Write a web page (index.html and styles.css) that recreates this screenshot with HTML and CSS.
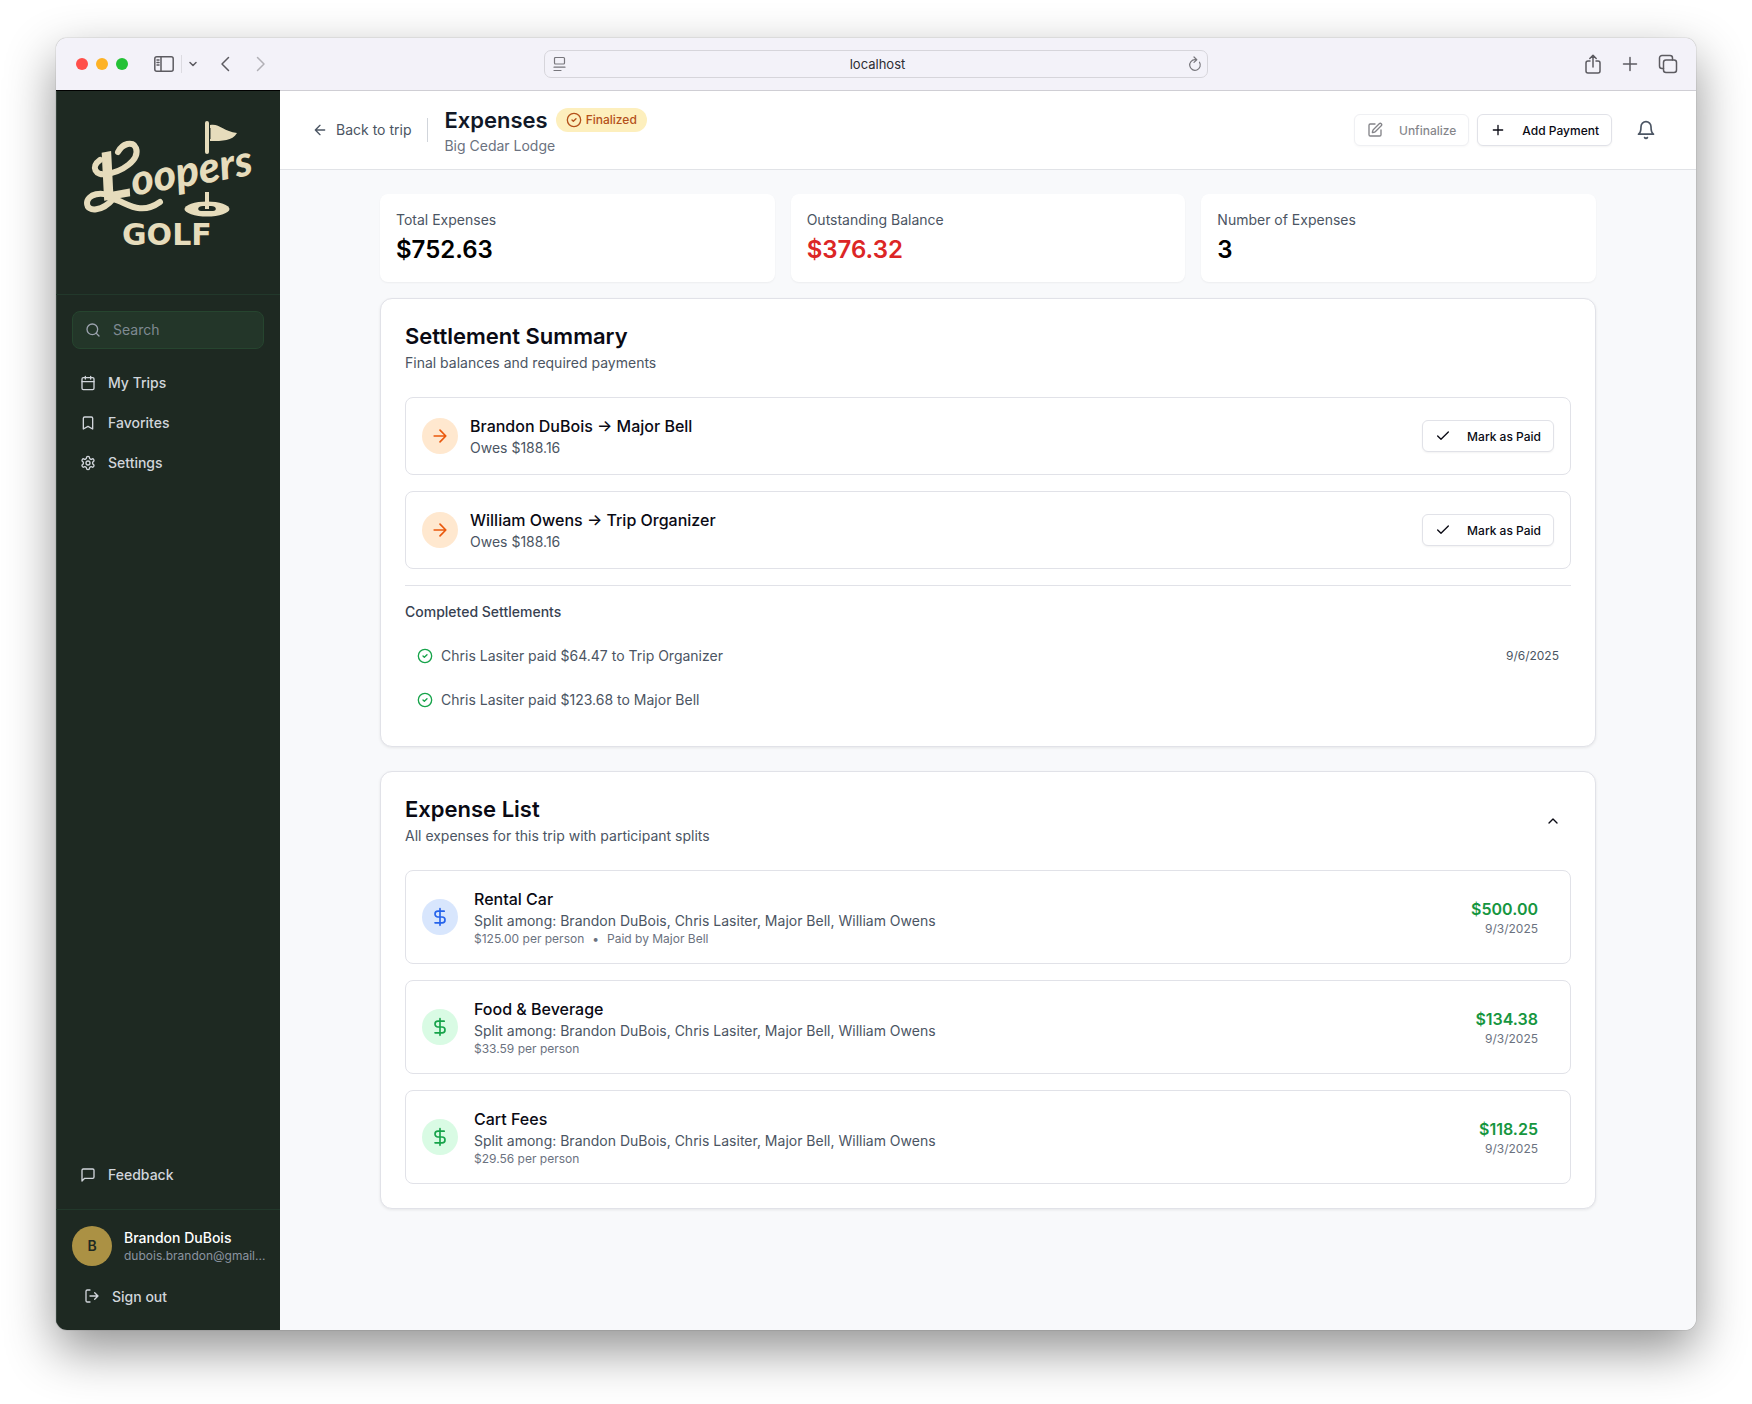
FILE: index.html
```html
<!DOCTYPE html>
<html lang="en">
<head>
<meta charset="UTF-8">
<meta name="viewport" content="width=device-width, initial-scale=1.0">
<title>Expenses - Loopers Golf</title>
<link rel="stylesheet" href="styles.css">
</head>
<body>

<!-- Shared icons -->
<svg class="sprite" aria-hidden="true">
    <symbol id="i-arrow-left" viewBox="0 0 24 24"><path d="m12 19-7-7 7-7M19 12H5"/></symbol>
    <symbol id="i-arrow-right" viewBox="0 0 24 24"><path d="M5 12h14M12 5l7 7-7 7"/></symbol>
    <symbol id="i-check" viewBox="0 0 24 24"><path d="M20 6 9 17l-5-5"/></symbol>
    <symbol id="i-check-circle" viewBox="0 0 24 24"><circle cx="12" cy="12" r="10"/><path d="m9 12 2 2 4-4"/></symbol>
    <symbol id="i-dollar" viewBox="0 0 24 24"><path d="M12 2v20M17 5H9.500a3.500 3.500 0 0 0 0 7h5a3.500 3.500 0 0 1 0 7H6"/></symbol>
    <symbol id="i-plus" viewBox="0 0 24 24"><path d="M5 12h14M12 5v14"/></symbol>
</svg>

<div class="window">

    <!-- Browser toolbar -->
    <div class="toolbar">
        <div class="toolbar-left">
            <div class="lights">
                <span class="light red"></span>
                <span class="light yellow"></span>
                <span class="light green"></span>
            </div>
            <button class="tool" aria-label="Show sidebar">
                <svg width="20" height="16" viewBox="0 0 20 16"><rect x=".8" y=".8" width="18.400" height="14.400" rx="2"/><path d="M7 1v14M3 4h2M3 6.500h2M3 9h2"/></svg>
            </button>
            <span class="tool-divider"></span>
            <button class="tool tool-menu" aria-label="Tab groups">
                <svg width="8" height="8" viewBox="0 0 8 8"><path d="m1 2.500 3 3 3-3"/></svg>
            </button>
            <button class="tool tool-back" aria-label="Back">
                <svg width="10" height="16" viewBox="0 0 10 16"><path d="M8.500 1.500 2 8l6.500 6.500"/></svg>
            </button>
            <button class="tool tool-forward" aria-label="Forward" disabled>
                <svg width="10" height="16" viewBox="0 0 10 16"><path d="M1.500 1.500 8 8l-6.500 6.500"/></svg>
            </button>
        </div>
        <div class="address">
            <svg width="14" height="16" viewBox="0 0 14 16"><rect x="1.500" y="1.500" width="10" height="6.500" rx="1"/><path d="M1 11.200h11M1 14.500h7"/></svg>
            <span>localhost</span>
            <svg width="14" height="16" viewBox="0 0 14 16"><path d="M11.500 6.200A5.300 5.300 0 1 1 7 3.700h1.500M6 1l2.800 2.700L6 6.400"/></svg>
        </div>
        <div class="toolbar-right">
            <button class="tool" aria-label="Share">
                <svg width="18" height="20" viewBox="0 0 18 20"><path d="M6 7H4a2 2 0 0 0-2 2v8a2 2 0 0 0 2 2h10a2 2 0 0 0 2-2V9a2 2 0 0 0-2-2h-2M9 13V1.500M5.800 4.500 9 1.300l3.200 3.200"/></svg>
            </button>
            <button class="tool" aria-label="New tab">
                <svg width="18" height="20" viewBox="0 0 18 20"><path d="M9 3.500v13M2.500 10h13"/></svg>
            </button>
            <button class="tool" aria-label="Tab overview">
                <svg width="20" height="20" viewBox="0 0 20 20"><rect x="5.500" y="6" width="13" height="12.500" rx="2.500"/><path d="M5.500 14.500H4A2.500 2.500 0 0 1 1.500 12V4A2.500 2.500 0 0 1 4 1.500h8A2.500 2.500 0 0 1 14.500 4v2"/></svg>
            </button>
        </div>
    </div>

    <div class="app">

        <!-- Sidebar -->
        <aside class="sidebar">
            <a class="logo" href="#" aria-label="Loopers Golf">
                <svg width="192" height="140" viewBox="0 0 192 140">
                    <!-- flag, pole and hole -->
                    <path d="M135 8v29" stroke="#e6dcbc" stroke-width="4" stroke-linecap="round"/>
                    <path d="M138 10c9-2 13 6 27 8-5 8-14 8-27 8z" fill="#e6dcbc"/>
                    <path d="M138 13v11" stroke="#1e2922" stroke-width="1"/>
                    <ellipse cx="135" cy="94" rx="22.500" ry="7.500" fill="#e6dcbc"/>
                    <path d="M131 91c-6 0-6 5-2 5h12c4 0 4-5-2-5" fill="#1e2922"/>
                    <path d="M135 77v17" stroke="#e6dcbc" stroke-width="4"/>
                    <!-- swashes of the wordmark -->
                    <path d="M42 84c-12-10-27-4-27 4 0 10 16 8 26-4 12 2 26 18 47 3" fill="none" stroke="#e6dcbc" stroke-width="6" stroke-linecap="round"/>
                    <path d="M28 45c-10 7-4 16 6 14 16-2 34-14 30-26-3-8-14-4-18 4" fill="none" stroke="#e6dcbc" stroke-width="6" stroke-linecap="round"/>
                    <g transform="rotate(-10 32 86)">
                        <text class="logo-script" x="30" y="86"><tspan class="logo-cap">L</tspan>oopers</text>
                    </g>
                    <text class="logo-golf" x="50" y="130">GOLF</text>
                </svg>
            </a>

            <div class="sidebar-nav">
                <label class="search">
                    <svg class="icon" width="16" height="16" viewBox="0 0 24 24"><circle cx="11" cy="11" r="8"/><path d="m21 21-4.300-4.300"/></svg>
                    <input type="text" placeholder="Search" aria-label="Search">
                </label>
                <nav>
                    <a class="nav-link" href="#">
                        <svg class="icon" width="16" height="16" viewBox="0 0 24 24"><path d="M8 2v4M16 2v4M3 10h18"/><rect x="3" y="4" width="18" height="18" rx="2"/></svg>
                        My Trips
                    </a>
                    <a class="nav-link" href="#">
                        <svg class="icon" width="16" height="16" viewBox="0 0 24 24"><path d="m19 21-7-4-7 4V5a2 2 0 0 1 2-2h10a2 2 0 0 1 2 2z"/></svg>
                        Favorites
                    </a>
                    <a class="nav-link" href="#">
                        <svg class="icon" width="16" height="16" viewBox="0 0 24 24"><path d="M12.220 2h-.44a2 2 0 0 0-2 2v.18a2 2 0 0 1-1 1.730l-.43.25a2 2 0 0 1-2 0l-.15-.08a2 2 0 0 0-2.730.73l-.22.38a2 2 0 0 0 .73 2.730l.15.1a2 2 0 0 1 1 1.720v.51a2 2 0 0 1-1 1.740l-.15.09a2 2 0 0 0-.73 2.730l.22.38a2 2 0 0 0 2.730.73l.15-.08a2 2 0 0 1 2 0l.43.25a2 2 0 0 1 1 1.730V20a2 2 0 0 0 2 2h.44a2 2 0 0 0 2-2v-.18a2 2 0 0 1 1-1.730l.43-.25a2 2 0 0 1 2 0l.15.08a2 2 0 0 0 2.730-.73l.22-.39a2 2 0 0 0-.73-2.730l-.15-.08a2 2 0 0 1-1-1.740v-.5a2 2 0 0 1 1-1.740l.15-.09a2 2 0 0 0 .73-2.730l-.22-.38a2 2 0 0 0-2.730-.73l-.15.08a2 2 0 0 1-2 0l-.43-.25a2 2 0 0 1-1-1.730V4a2 2 0 0 0-2-2z"/><circle cx="12" cy="12" r="3"/></svg>
                        Settings
                    </a>
                </nav>
                <a class="nav-link feedback" href="#">
                    <svg class="icon" width="16" height="16" viewBox="0 0 24 24"><path d="M21 15a2 2 0 0 1-2 2H7l-4 4V5a2 2 0 0 1 2-2h14a2 2 0 0 1 2 2z"/></svg>
                    Feedback
                </a>
            </div>

            <div class="account">
                <div class="user">
                    <span class="avatar">B</span>
                    <div class="user-text">
                        <div class="user-name">Brandon DuBois</div>
                        <div class="user-email">dubois.brandon@gmail...</div>
                    </div>
                </div>
                <button class="sign-out">
                    <svg class="icon" width="16" height="16" viewBox="0 0 24 24"><path d="M9 21H5a2 2 0 0 1-2-2V5a2 2 0 0 1 2-2h4M16 17l5-5-5-5M21 12H9"/></svg>
                    Sign out
                </button>
            </div>
        </aside>

        <div class="page">

            <!-- Page header -->
            <header class="header">
                <a class="back" href="#">
                    <svg class="icon" width="16" height="16"><use href="#i-arrow-left"/></svg>
                    Back to trip
                </a>
                <span class="header-divider"></span>
                <div class="heading">
                    <div class="heading-row">
                        <h1>Expenses</h1>
                        <span class="badge">
                            <svg class="icon" width="16" height="16"><use href="#i-check-circle"/></svg>
                            Finalized
                        </span>
                    </div>
                    <p>Big Cedar Lodge</p>
                </div>
                <div class="header-actions">
                    <button class="btn" disabled>
                        <svg class="icon" width="16" height="16" viewBox="0 0 24 24"><path d="M12 3H5a2 2 0 0 0-2 2v14a2 2 0 0 0 2 2h14a2 2 0 0 0 2-2v-7"/><path d="M18.375 2.625a1 1 0 0 1 3 3l-9.013 9.014a2 2 0 0 1-.853.505l-2.873.84a.5.5 0 0 1-.62-.62l.84-2.873a2 2 0 0 1 .506-.852z"/></svg>
                        Unfinalize
                    </button>
                    <button class="btn">
                        <svg class="icon" width="16" height="16"><use href="#i-plus"/></svg>
                        Add Payment
                    </button>
                    <button class="icon-btn bell" aria-label="Notifications">
                        <svg class="icon" width="20" height="20" viewBox="0 0 24 24"><path d="M6 8a6 6 0 0 1 12 0c0 7 3 9 3 9H3s3-2 3-9M10.300 21a1.940 1.940 0 0 0 3.400 0"/></svg>
                    </button>
                </div>
            </header>

            <main class="content">
                <section class="stats">
                    <div class="stat">
                        <div class="stat-label">Total Expenses</div>
                        <div class="stat-value">$752.63</div>
                    </div>
                    <div class="stat">
                        <div class="stat-label">Outstanding Balance</div>
                        <div class="stat-value owed">$376.32</div>
                    </div>
                    <div class="stat">
                        <div class="stat-label">Number of Expenses</div>
                        <div class="stat-value">3</div>
                    </div>
                </section>

                <!-- Settlements -->
                <section class="card">
                    <div class="card-header">
                        <div>
                            <h2>Settlement Summary</h2>
                            <p>Final balances and required payments</p>
                        </div>
                    </div>
                    <div class="list">
                        <div class="item">
                            <span class="bubble orange"><svg class="icon" width="20" height="20"><use href="#i-arrow-right"/></svg></span>
                            <div>
                                <h3>Brandon DuBois → Major Bell</h3>
                                <p>Owes $188.16</p>
                            </div>
                            <button class="btn push">
                                <svg class="icon" width="16" height="16"><use href="#i-check"/></svg>
                                Mark as Paid
                            </button>
                        </div>
                        <div class="item">
                            <span class="bubble orange"><svg class="icon" width="20" height="20"><use href="#i-arrow-right"/></svg></span>
                            <div>
                                <h3>William Owens → Trip Organizer</h3>
                                <p>Owes $188.16</p>
                            </div>
                            <button class="btn push">
                                <svg class="icon" width="16" height="16"><use href="#i-check"/></svg>
                                Mark as Paid
                            </button>
                        </div>
                    </div>
                    <div class="completed">
                        <h4>Completed Settlements</h4>
                        <div class="completed-row">
                            <svg class="icon" width="16" height="16"><use href="#i-check-circle"/></svg>
                            <span>Chris Lasiter paid $64.47 to Trip Organizer</span>
                            <span class="date push">9/6/2025</span>
                        </div>
                        <div class="completed-row">
                            <svg class="icon" width="16" height="16"><use href="#i-check-circle"/></svg>
                            <span>Chris Lasiter paid $123.68 to Major Bell</span>
                        </div>
                    </div>
                </section>

                <!-- Expenses -->
                <section class="card">
                    <div class="card-header">
                        <div>
                            <h2>Expense List</h2>
                            <p>All expenses for this trip with participant splits</p>
                        </div>
                        <button class="icon-btn push" aria-label="Collapse">
                            <svg class="icon" width="16" height="16" viewBox="0 0 24 24"><path d="m18 15-6-6-6 6"/></svg>
                        </button>
                    </div>
                    <div class="list">
                        <div class="item expense">
                            <span class="bubble blue"><svg class="icon" width="20" height="20"><use href="#i-dollar"/></svg></span>
                            <div>
                                <h3>Rental Car</h3>
                                <p>Split among: Brandon DuBois, Chris Lasiter, Major Bell, William Owens</p>
                                <div class="per-person"><span>$125.00 per person</span><span>•</span><span>Paid by Major Bell</span></div>
                            </div>
                            <div class="amount push">
                                <strong>$500.00</strong>
                                <span>9/3/2025</span>
                            </div>
                        </div>
                        <div class="item expense">
                            <span class="bubble green"><svg class="icon" width="20" height="20"><use href="#i-dollar"/></svg></span>
                            <div>
                                <h3>Food &amp; Beverage</h3>
                                <p>Split among: Brandon DuBois, Chris Lasiter, Major Bell, William Owens</p>
                                <div class="per-person"><span>$33.59 per person</span></div>
                            </div>
                            <div class="amount push">
                                <strong>$134.38</strong>
                                <span>9/3/2025</span>
                            </div>
                        </div>
                        <div class="item expense">
                            <span class="bubble green"><svg class="icon" width="20" height="20"><use href="#i-dollar"/></svg></span>
                            <div>
                                <h3>Cart Fees</h3>
                                <p>Split among: Brandon DuBois, Chris Lasiter, Major Bell, William Owens</p>
                                <div class="per-person"><span>$29.56 per person</span></div>
                            </div>
                            <div class="amount push">
                                <strong>$118.25</strong>
                                <span>9/3/2025</span>
                            </div>
                        </div>
                    </div>
                </section>
            </main>
        </div>
    </div>
</div>

</body>
</html>
```

FILE: styles.css
```css
* {
    box-sizing: border-box;
}

body {
    margin: 0;
    padding: 38px 56px 74px;
    min-height: 100vh;
    display: flex;
    background: #ffffff;
    font-family: Inter, "Liberation Sans", sans-serif;
    font-size: 14px;
    line-height: 20px;
    color: #0a0a14;
}

h1, h2, h3, h4, p {
    margin: 0;
}

a {
    color: inherit;
    text-decoration: none;
}

button {
    font-family: inherit;
    cursor: pointer;
}

.sprite {
    position: absolute;
    width: 0;
    height: 0;
}

.icon {
    flex: none;
    fill: none;
    stroke: currentColor;
    stroke-width: 2;
    stroke-linecap: round;
    stroke-linejoin: round;
}

.push {
    margin-left: auto;
}

.window {
    flex: 1;
    min-width: 0;
    display: flex;
    flex-direction: column;
    border-radius: 11px;
    overflow: hidden;
    box-shadow: 0 0 1px rgba(0, 0, 0, 0.6), 0 20px 50px rgba(0, 0, 0, 0.43);
}

/* Browser toolbar */
.toolbar {
    display: grid;
    grid-template-columns: 1fr minmax(0, 664px) 1fr;
    align-items: center;
    height: 52px;
    background: #f3f2f9;
}

.toolbar-left, .toolbar-right, .lights {
    display: flex;
    align-items: center;
}

.toolbar-left {
    padding-left: 20px;
}

.toolbar-right {
    justify-content: flex-end;
    gap: 19px;
    padding-right: 18px;
}

.lights {
    gap: 8px;
    margin-right: 26px;
}

.light {
    width: 12px;
    height: 12px;
    border-radius: 50%;
}

.light.red { background: #ff4f4a; }
.light.yellow { background: #fdb225; }
.light.green { background: #23c136; }

.tool {
    display: flex;
    padding: 0;
    border: none;
    background: none;
    color: #5c5b61;
}

.tool svg, .address svg {
    fill: none;
    stroke: currentColor;
    stroke-width: 1.5;
    stroke-linecap: round;
    stroke-linejoin: round;
}

.tool-divider {
    width: 1px;
    height: 18px;
    margin: 0 7px;
    background: #dcdbe1;
}

.tool-back { margin-left: 23px; }
.tool-forward { margin-left: 26px; }
.tool-forward:disabled { color: #b1b0b6; }

.address {
    display: flex;
    align-items: center;
    justify-content: space-between;
    height: 28px;
    padding: 0 5px 0 8px;
    border: 1px solid #d6d5db;
    border-radius: 7px;
    font-size: 13px;
    color: #2e2d33;
}

.address svg {
    color: #77767c;
    stroke-width: 1.2;
}

.app {
    flex: 1;
    display: flex;
}

/* Sidebar */
.sidebar {
    flex: none;
    width: 224px;
    display: flex;
    flex-direction: column;
    border-top: 1px solid #000000;
    background: #1e2922;
    box-shadow: inset 1px 0 #35423a;
    color: #d1d5db;
    font-weight: 500;
}

.logo {
    display: flex;
    padding: 24px 16px 39px;
    border-bottom: 1px solid #22382b;
}

.logo-script {
    font-family: Lato, sans-serif;
    font-style: italic;
    font-weight: 900;
    font-size: 43px;
    fill: #e6dcbc;
}

.logo-cap {
    font-size: 66px;
}

.logo-golf {
    font-family: "DejaVu Sans", sans-serif;
    font-weight: bold;
    font-size: 30px;
    fill: #e6dcbc;
}

.sidebar-nav {
    flex: 1;
    display: flex;
    flex-direction: column;
    gap: 16px;
    padding: 16px;
}

.search {
    display: flex;
    align-items: center;
    gap: 12px;
    height: 38px;
    padding: 0 12px;
    border: 1px solid #26452f;
    border-radius: 8px;
    background: #233629;
    color: #9ca3af;
}

.search input {
    flex: 1;
    min-width: 0;
    padding: 0;
    border: none;
    outline: none;
    background: none;
    font: inherit;
    font-weight: 400;
    color: #ffffff;
}

.search input::placeholder {
    color: #7f8a92;
    opacity: 1;
}

nav {
    display: flex;
    flex-direction: column;
    gap: 4px;
}

.nav-link {
    display: flex;
    align-items: center;
    gap: 12px;
    height: 36px;
    padding: 0 8px;
}

.feedback {
    margin-top: auto;
}

.account {
    display: flex;
    flex-direction: column;
    gap: 12px;
    padding: 16px;
    border-top: 1px solid #22382b;
}

.user {
    display: flex;
    align-items: center;
    gap: 12px;
}

.avatar {
    flex: none;
    display: flex;
    align-items: center;
    justify-content: center;
    width: 40px;
    height: 40px;
    border-radius: 50%;
    background: #ab9144;
    color: #1e2922;
    font-weight: 600;
}

.user-text {
    min-width: 0;
}

.user-name {
    color: #ffffff;
}

.user-email {
    white-space: nowrap;
    font-size: 12px;
    font-weight: 400;
    line-height: 16px;
    color: #8b94a0;
}

.sign-out {
    display: flex;
    align-items: center;
    gap: 12px;
    height: 36px;
    padding: 0 12px;
    border: none;
    background: none;
    font-size: 14px;
    font-weight: 500;
    color: #d1d5db;
}

/* Page */
.page {
    flex: 1;
    min-width: 0;
    display: flex;
    flex-direction: column;
    border-top: 1px solid #cfced4;
    background: #f8f9fb;
}

.header {
    display: flex;
    align-items: center;
    gap: 16px;
    height: 79px;
    padding: 0 32px;
    border-bottom: 1px solid #e1e3e7;
    background: #ffffff;
}

.back {
    display: flex;
    align-items: center;
    gap: 8px;
    color: #4b5563;
}

.header-divider {
    width: 1px;
    height: 24px;
    background: #d1d5db;
}

.heading-row {
    display: flex;
    align-items: center;
    gap: 8px;
}

h1 {
    font-size: 22px;
    font-weight: 600;
    line-height: 32px;
    color: #111827;
}

.heading p {
    color: #6b7280;
}

.badge {
    display: flex;
    align-items: center;
    gap: 4px;
    height: 24px;
    padding: 0 10px;
    border-radius: 12px;
    background: #fdefbd;
    font-size: 12px;
    font-weight: 500;
    color: #b4511a;
}

.header-actions {
    display: flex;
    align-items: center;
    gap: 8px;
    margin-left: auto;
}

.btn {
    display: flex;
    align-items: center;
    gap: 16px;
    height: 32px;
    padding: 0 12px;
    border: 1px solid #e1e2e8;
    border-radius: 6px;
    background: #ffffff;
    box-shadow: 0 1px 2px rgba(0, 0, 0, 0.05);
    font-size: 12px;
    font-weight: 500;
    color: #0a0a14;
}

.btn:disabled {
    opacity: 0.5;
}

.icon-btn {
    display: flex;
    align-items: center;
    justify-content: center;
    width: 36px;
    height: 36px;
    padding: 0;
    border: none;
    background: none;
    color: #0a0a14;
}

.bell {
    margin-left: 8px;
    color: #4b5563;
}

.content {
    width: 100%;
    max-width: 1280px;
    margin: 0 auto;
    padding: 24px 32px;
}

.stats {
    display: grid;
    grid-template-columns: repeat(3, 1fr);
    gap: 16px;
    margin-bottom: 16px;
}

.stat {
    padding: 16px;
    border-radius: 8px;
    background: #ffffff;
    box-shadow: 0 1px 2px rgba(0, 0, 0, 0.05);
}

.stat-label {
    margin-bottom: 4px;
    color: #4b5563;
}

.stat-value {
    font-size: 24px;
    font-weight: 600;
    line-height: 32px;
    color: #000000;
}

.stat-value.owed {
    color: #dc2626;
}

.card {
    margin-bottom: 24px;
    padding: 24px;
    border: 1px solid #e1e2e8;
    border-radius: 12px;
    background: #ffffff;
    box-shadow: 0 1px 3px rgba(0, 0, 0, 0.08);
}

.card-header {
    display: flex;
    align-items: center;
    margin-bottom: 24px;
}

h2 {
    margin-bottom: 4px;
    font-size: 22px;
    font-weight: 600;
    line-height: 26px;
}

.card p {
    color: #4b5563;
}

.list {
    display: flex;
    flex-direction: column;
    gap: 16px;
}

.item {
    display: flex;
    align-items: center;
    gap: 12px;
    padding: 16px;
    border: 1px solid #e1e2e8;
    border-radius: 8px;
}

.item.expense {
    gap: 16px;
    padding-right: 32px;
}

h3 {
    font-size: 16px;
    font-weight: 500;
    line-height: 24px;
}

.bubble {
    flex: none;
    display: flex;
    align-items: center;
    justify-content: center;
    width: 36px;
    height: 36px;
    border-radius: 50%;
}

.bubble.orange { background: #ffe8cf; color: #ea580c; }
.bubble.blue { background: #d8e6fd; color: #2563eb; }
.bubble.green { background: #d9fbe4; color: #16a34a; }

.completed {
    margin-top: 16px;
    padding-top: 16px;
    border-top: 1px solid #e1e2e8;
}

h4 {
    margin-bottom: 12px;
    font-size: 14px;
    font-weight: 500;
    color: #374151;
}

.completed-row {
    display: flex;
    align-items: center;
    gap: 8px;
    padding: 12px;
    color: #4b5563;
}

.completed-row .icon {
    color: #16a34a;
}

.completed-row .date {
    font-size: 12px;
}

.per-person {
    display: flex;
    gap: 8px;
    font-size: 12px;
    line-height: 16px;
    color: #6b7280;
}

.amount {
    display: flex;
    flex-direction: column;
    align-items: flex-end;
}

.amount strong {
    font-size: 16px;
    font-weight: 600;
    line-height: 24px;
    color: #16963f;
}

.amount span {
    font-size: 12px;
    line-height: 16px;
    color: #6b7280;
}
```
